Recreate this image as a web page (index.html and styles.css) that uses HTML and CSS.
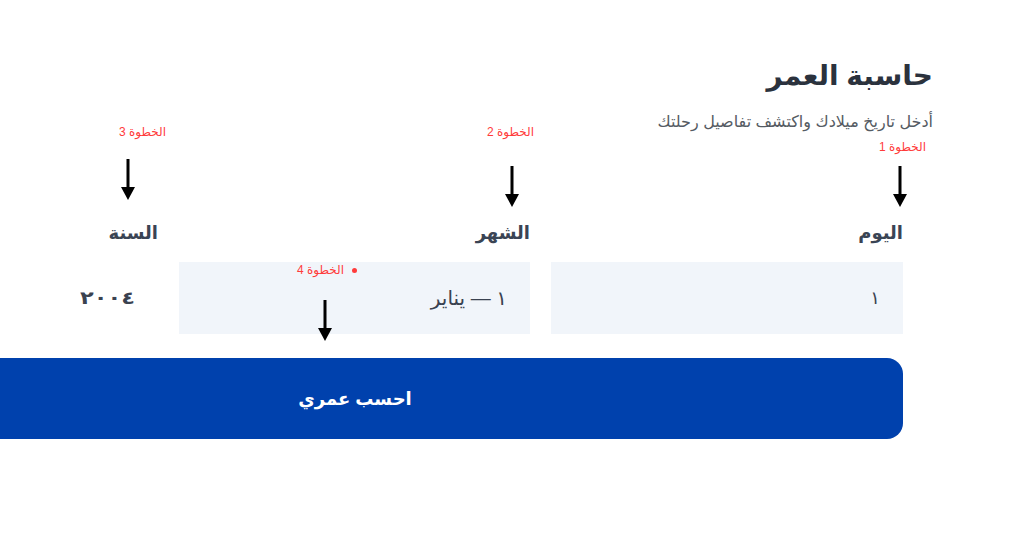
FILE: index.html
```html
<!DOCTYPE html>
<html lang="ar" dir="rtl">
<head>
<meta charset="utf-8">
<title>حاسبة العمر</title>
<link rel="stylesheet" href="styles.css">
</head>
<body>
<div class="page">
  <header class="header">
    <h1 class="title">حاسبة العمر</h1>
    <p class="subtitle">أدخل تاريخ ميلادك واكتشف تفاصيل رحلتك</p>
  </header>

  <form class="form">
    <div class="fields">
      <div class="field">
        <label class="label">اليوم</label>
        <div class="input">١</div>
      </div>
      <div class="field">
        <label class="label">الشهر</label>
        <div class="input input-month">١ — يناير</div>
      </div>
      <div class="field">
        <label class="label">السنة</label>
        <div class="input input-plain"><span class="year">٢٠٠٤</span></div>
      </div>
    </div>
    <button type="button" class="submit">احسب عمري</button>
  </form>

  <span class="step step-1">الخطوة 1</span>
  <span class="step step-2">الخطوة 2</span>
  <span class="step step-3">الخطوة 3</span>
  <span class="step step-4"><span class="dot"></span>الخطوة 4</span>

  <svg class="arrow arrow-1" viewBox="0 0 16 42" width="16" height="42"><rect x="6.5" y="0" width="3" height="30" fill="#000"/><polygon points="1,28 15,28 8,41" fill="#000"/></svg>
  <svg class="arrow arrow-2" viewBox="0 0 16 42" width="16" height="42"><rect x="6.5" y="0" width="3" height="30" fill="#000"/><polygon points="1,28 15,28 8,41" fill="#000"/></svg>
  <svg class="arrow arrow-3" viewBox="0 0 16 42" width="16" height="42"><rect x="6.5" y="0" width="3" height="30" fill="#000"/><polygon points="1,28 15,28 8,41" fill="#000"/></svg>
  <svg class="arrow arrow-4" viewBox="0 0 16 42" width="16" height="42"><rect x="6.5" y="0" width="3" height="30" fill="#000"/><polygon points="1,28 15,28 8,41" fill="#000"/></svg>
</div>
</body>
</html>
```

FILE: styles.css
```css
html, body {
  margin: 0;
  padding: 0;
  background: #ffffff;
  overflow: hidden;
}
body {
  direction: rtl;
  font-family: "Liberation Sans", "DejaVu Sans", sans-serif;
  width: 1024px;
  height: 538px;
}
.page {
  position: relative;
  width: 1024px;
  height: 538px;
  padding-top: 55px;
  box-sizing: border-box;
}
.header {
  margin-right: 91px;
}
.title {
  margin: 0;
  font-size: 28px;
  line-height: 42px;
  font-weight: 700;
  color: #2b323d;
}
.subtitle {
  margin: 15px 0 0;
  font-size: 16px;
  line-height: 20px;
  color: #555b63;
}
.form {
  margin-right: 121px;
  width: 1096px;
  margin-top: 89px;
}
.fields {
  display: grid;
  grid-template-columns: 352px 351px 351px;
  column-gap: 21px;
}
.field {
  display: flex;
  flex-direction: column;
}
.label {
  font-size: 18px;
  line-height: 24px;
  font-weight: 700;
  color: #3a4454;
}
.input {
  margin-top: 17px;
  height: 72px;
  background: #f1f5fa;
  box-sizing: border-box;
  padding: 0 23px;
  display: flex;
  align-items: center;
  font-size: 18px;
  color: #3a4250;
}
.input-month {
  font-size: 20px;
}
.input-plain {
  background: #ffffff;
  font-weight: 700;
}
.year {
  display: inline-block;
  font-size: 18px;
  transform: scaleX(1.25);
  transform-origin: right center;
}
.submit {
  display: block;
  width: 100%;
  height: 81px;
  margin-top: 24px;
  border: none;
  border-radius: 0 16px 16px 0;
  background: #0041ad;
  color: #ffffff;
  font-family: "Liberation Sans", "DejaVu Sans", sans-serif;
  font-size: 18px;
  font-weight: 700;
}
.step {
  position: absolute;
  font-size: 12px;
  line-height: 14px;
  color: #ff3b3b;
  white-space: nowrap;
}
.step-1 { top: 140px; right: 98px; }
.step-2 { top: 125px; right: 490px; }
.step-3 { top: 125px; right: 858px; }
.step-4 {
  top: 263px;
  right: 667px;
  display: flex;
  align-items: center;
  gap: 8px;
}
.dot {
  width: 5px;
  height: 5px;
  border-radius: 50%;
  background: #ff3b3b;
}
.arrow {
  position: absolute;
}
.arrow-1 { top: 166px; left: 892px; }
.arrow-2 { top: 166px; left: 504px; }
.arrow-3 { top: 159px; left: 120px; }
.arrow-4 { top: 300px; left: 317px; }
```
